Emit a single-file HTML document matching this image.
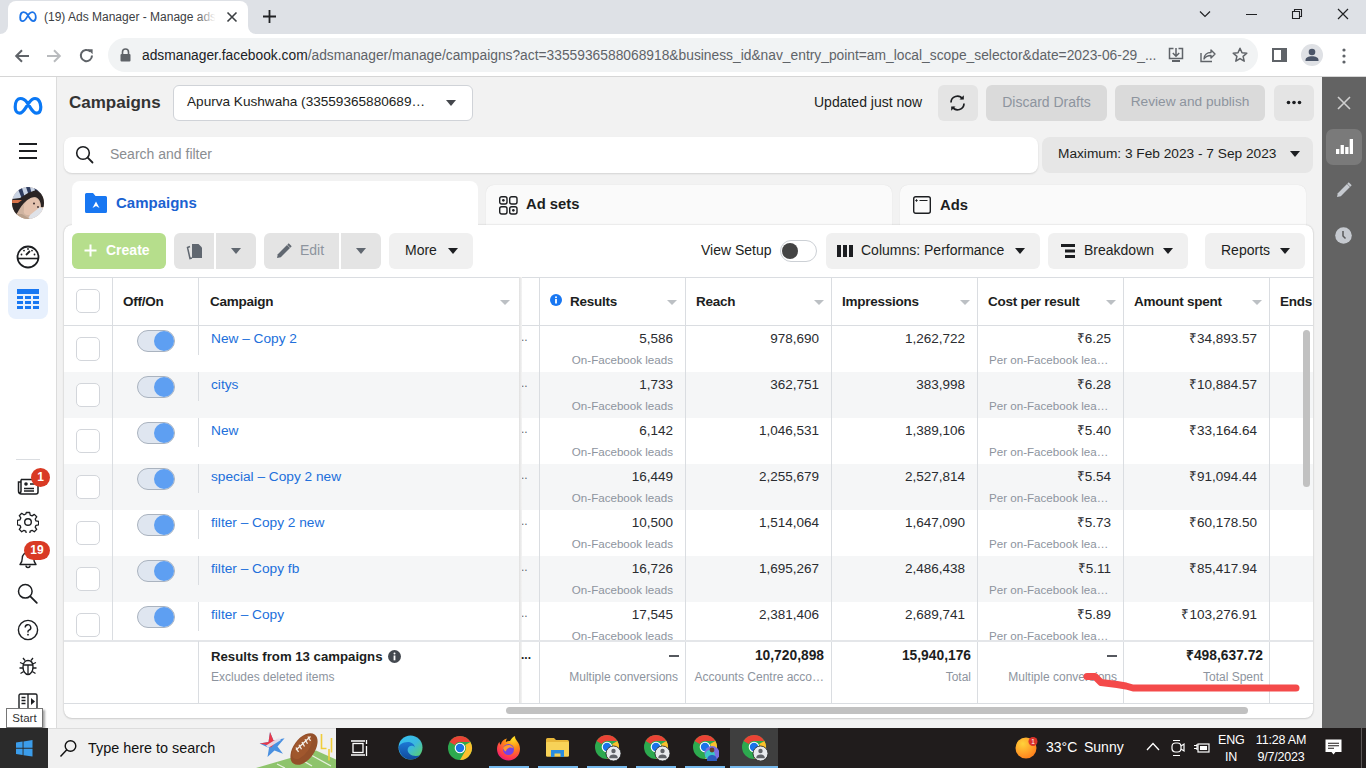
<!DOCTYPE html>
<html><head><meta charset="utf-8">
<style>
*{box-sizing:border-box;margin:0;padding:0}
html,body{width:1366px;height:768px;overflow:hidden;font-family:"Liberation Sans",sans-serif;background:#f2f2f2;position:relative;color:#1c1e21}
.a{position:absolute}
.t{white-space:nowrap;line-height:1.15}
svg{display:block}
/* chrome */
#tabbar{left:0;top:0;width:1366px;height:34px;background:#dee1e6}
#tab{left:8px;top:1px;width:240px;height:33px;background:#fff;border-radius:8px 8px 0 0}
#toolbar{left:0;top:34px;width:1366px;height:43px;background:#fff;border-bottom:1px solid #d6d6d6}
#omni{left:108px;top:38px;width:1150px;height:34px;background:#f1f3f4;border-radius:17px}
.tabtitle{left:44px;top:10px;font-size:12px;color:#3c4043}
.url{left:142px;top:47.5px;font-size:13.8px;color:#5f6368}
.url b{font-weight:normal;color:#202124}
/* app */
#leftnav{left:0;top:77px;width:57px;height:651px;background:#fff;border-right:1px solid #dcdcdc}
#rightbar{left:1322px;top:77px;width:44px;height:651px;background:#636363}
#taskbar{left:0;top:728px;width:1366px;height:40px;background:#201c1c}
.gbtn{background:#e4e4e4;border-radius:6px}
.lbtn{background:#f0f0f0;border-radius:6px}
.hdr{font-size:13.5px;letter-spacing:-0.25px;font-weight:bold;color:#1c1e21}
.num{font-size:13.5px;color:#2a2c30}
.sub{font-size:11.6px;color:#8d949e}
.lnk{font-size:13.7px;color:#216fdb}
.dots{font-size:12px;color:#65676b}
.cb{width:24px;height:24px;border:1px solid #d3d6db;border-radius:5px;background:#fff}
.tg{width:38px;height:22px;border-radius:11px;background:#dfe6f0;border:1px solid #aab3bf}
.tg .kn{position:absolute;right:0px;top:0px;width:20px;height:20px;border-radius:50%;background:#5e9ff2}
.caret{width:0;height:0;border-left:5.5px solid transparent;border-right:5.5px solid transparent;border-top:6px solid #1c1e21}
.hcaret{width:0;height:0;border-left:5px solid transparent;border-right:5px solid transparent;border-top:5px solid #bcc0c4}
.vl{width:1px;background:#dadde1}
.hl{height:1px;background:#dadde1}

</style></head><body>
<!-- ===== CHROME ===== -->
<div id="tabbar" class="a"></div>
<div class="a" style="left:0;top:26px;width:256px;height:8px;background:#fff"></div>
<div class="a" style="left:0;top:26px;width:8px;height:8px;background:#dee1e6;border-bottom-right-radius:8px"></div>
<div class="a" style="left:248px;top:26px;width:8px;height:8px;background:#dee1e6;border-bottom-left-radius:8px"></div>
<div id="tab" class="a"></div>
<svg class="a" style="left:19px;top:11px" width="18" height="12" viewBox="0 0 18 12"><path d="M4.5 1.2C2.4 1.2 1.2 3.6 1.2 6.4c0 2.2 1 3.7 2.6 3.7 1.5 0 2.5-1.1 4.2-4L9.6 3.4C10.9 1.8 11.8 1.2 13.2 1.2c2.1 0 3.6 2.4 3.6 5.1 0 2.3-1 3.8-2.6 3.8-1.6 0-2.6-1.3-4.1-3.8L8.6 3.6C7.3 1.8 6.2 1.2 4.5 1.2z" fill="none" stroke="#1a73e8" stroke-width="1.8"/></svg>
<div class="a t tabtitle" style="top:11px">(19) Ads Manager - Manage ads</div>
<div class="a" style="left:196px;top:6px;width:28px;height:24px;background:linear-gradient(90deg,rgba(255,255,255,0),#fff 70%)"></div>
<svg class="a" style="left:226px;top:11px" width="12" height="12" viewBox="0 0 12 12"><path d="M1.5 1.5l9 9M10.5 1.5l-9 9" stroke="#3c4043" stroke-width="1.6"/></svg>
<svg class="a" style="left:262px;top:9px" width="15" height="15" viewBox="0 0 15 15"><path d="M7.5 1v13M1 7.5h13" stroke="#202124" stroke-width="1.8"/></svg>
<svg class="a" style="left:1199px;top:10px" width="12" height="8" viewBox="0 0 12 8"><path d="M1 1.5l5 5 5-5" fill="none" stroke="#202124" stroke-width="1.2"/></svg>
<div class="a" style="left:1246px;top:14px;width:11px;height:1px;background:#202124"></div>
<svg class="a" style="left:1291px;top:8px" width="12" height="12" viewBox="0 0 12 12"><path d="M1.5 3.5h7v7h-7zM3.5 3.5v-2h7v7h-2" fill="none" stroke="#202124" stroke-width="1.1"/></svg>
<svg class="a" style="left:1337px;top:8px" width="12" height="12" viewBox="0 0 12 12"><path d="M1 1l10 10M11 1L1 11" stroke="#202124" stroke-width="1.2"/></svg>
<div id="toolbar" class="a"></div>
<svg class="a" style="left:14px;top:48px" width="16" height="16" viewBox="0 0 16 16"><path d="M15 8H2.5M8 2.2L2.2 8 8 13.8" fill="none" stroke="#5f6368" stroke-width="2"/></svg>
<svg class="a" style="left:46px;top:48px" width="16" height="16" viewBox="0 0 16 16"><path d="M1 8h12.5M8 2.2L13.8 8 8 13.8" fill="none" stroke="#b9bbbe" stroke-width="2"/></svg>
<svg class="a" style="left:78px;top:47px" width="17" height="17" viewBox="0 0 17 17"><path d="M14 8.5A5.6 5.6 0 1 1 12.3 4.5" fill="none" stroke="#5f6368" stroke-width="2"/><path d="M9.6 2.2h5v5z" fill="#5f6368"/></svg>
<div id="omni" class="a"></div>
<svg class="a" style="left:120px;top:48px" width="11" height="14" viewBox="0 0 11 14"><path d="M2.5 6V4a3 3 0 0 1 6 0v2" fill="none" stroke="#5f6368" stroke-width="1.6"/><rect x="0.5" y="6" width="10" height="7.5" rx="1" fill="#5f6368"/></svg>
<div class="a t url"><b>adsmanager.facebook.com</b>/adsmanager/manage/campaigns?act=3355936588068918&amp;business_id&amp;nav_entry_point=am_local_scope_selector&amp;date=2023-06-29_...</div>
<svg class="a" style="left:1168px;top:47px" width="16" height="16" viewBox="0 0 16 16"><path d="M5.5 1.5H1.5v10h13v-10h-4" fill="none" stroke="#5f6368" stroke-width="1.5"/><path d="M8 1v8M4.8 6L8 9.2 11.2 6" fill="none" stroke="#5f6368" stroke-width="1.5"/><rect x="4" y="13" width="8" height="2" fill="#5f6368"/></svg>
<svg class="a" style="left:1200px;top:47px" width="16" height="16" viewBox="0 0 16 16"><path d="M1 6v8.5h11" fill="none" stroke="#5f6368" stroke-width="1.4"/><path d="M4 12c0-4 3-6.5 7-6.5V3l4 4-4 4V8.5c-3 0-5.5 1-7 3.5z" fill="none" stroke="#5f6368" stroke-width="1.4" stroke-linejoin="round"/></svg>
<svg class="a" style="left:1232px;top:47px" width="16" height="16" viewBox="0 0 16 16"><path d="M8 1.3l2 4.5 4.8.4-3.7 3.2 1.1 4.8L8 11.6l-4.2 2.6 1.1-4.8L1.2 6.2 6 5.8z" fill="none" stroke="#5f6368" stroke-width="1.5" stroke-linejoin="round"/></svg>
<svg class="a" style="left:1272px;top:48px" width="15" height="14" viewBox="0 0 15 14"><rect x="1" y="1" width="13" height="12" fill="none" stroke="#5f6368" stroke-width="2"/><rect x="9" y="1" width="5" height="12" fill="#5f6368"/></svg>
<div class="a" style="left:1301px;top:44px;width:22px;height:22px;border-radius:50%;background:#dfe1e5"></div>
<svg class="a" style="left:1301px;top:44px" width="22" height="22" viewBox="0 0 22 22"><circle cx="11" cy="8" r="3.3" fill="#4b5568"/><path d="M4.5 16c0-2.6 3-3.8 6.5-3.8s6.5 1.2 6.5 3.8v1h-13z" fill="#4b5568"/></svg>
<svg class="a" style="left:1342px;top:48px" width="4" height="16" viewBox="0 0 4 16"><circle cx="2" cy="2" r="1.6" fill="#5f6368"/><circle cx="2" cy="8" r="1.6" fill="#5f6368"/><circle cx="2" cy="14" r="1.6" fill="#5f6368"/></svg>

<!-- ===== LEFT NAV ===== -->
<div id="leftnav" class="a"></div>
<svg class="a" style="left:13px;top:96px" width="30" height="21" viewBox="0 0 30 21"><path d="M7.5 2.5C4 2.5 2.2 6.5 2.2 11c0 3.6 1.6 6.2 4.3 6.2 2.4 0 4-1.8 7-6.6L15.8 7C17.9 3.9 19.5 2.5 22 2.5c3.6 0 5.8 4 5.8 8.6 0 3.7-1.6 6.1-4.2 6.1-2.6 0-4.2-2.1-6.8-6.4l-2.5-4C12.1 3.6 10.3 2.5 7.5 2.5z" fill="none" stroke="#0a78f5" stroke-width="3.2"/></svg>
<div class="a" style="left:19px;top:143px;width:18px;height:2px;background:#1c1e21"></div>
<div class="a" style="left:19px;top:150px;width:18px;height:2px;background:#1c1e21"></div>
<div class="a" style="left:19px;top:157px;width:18px;height:2px;background:#1c1e21"></div>
<svg class="a" style="left:12px;top:187px" width="32" height="32" viewBox="0 0 32 32"><defs><clipPath id="avc"><circle cx="16" cy="16" r="16"/></clipPath></defs><g clip-path="url(#avc)"><rect width="32" height="32" fill="#cfb3a0"/><path d="M0 0h32v9L20 6 8 12 0 14z" fill="#c9d3e3"/><path d="M6 2l4 10 3-1-3-10zM14 0l3 9 3-1-2-8zM22 0l2 7 3 0-1-7z" fill="#2f3c5e"/><path d="M0 12l8-1 8-5 8-3 8 5v12l-3 0c0-5-2-9-6-10-4 0-8 3-11 6-4 4-6 9-8 12H0z" fill="#2a2424"/><path d="M0 13h10l-4 3H0z" fill="#d9744a"/><path d="M12 18c3-5 7-8 11-7 4 1 6 5 5 10-2 5-7 7-12 7-3 0-5-2-4-5z" fill="#e3c2ae"/><path d="M18 28l10-8 4 2v10H16z" fill="#dfe2e8"/><path d="M0 27l10 0 8 5H0z" fill="#b9a08c"/><circle cx="22" cy="16.5" r="1" fill="#3a2a2a"/><circle cx="26" cy="20" r="0.9" fill="#3a2a2a"/></g></svg>
<svg class="a" style="left:16px;top:245px" width="24" height="24" viewBox="0 0 24 24"><circle cx="12" cy="12" r="10.5" fill="none" stroke="#1c1e21" stroke-width="1.8"/><path d="M1.8 13.5h20.4" stroke="#1c1e21" stroke-width="1.6"/><path d="M10 10l4-4" stroke="#1c1e21" stroke-width="1.8"/><circle cx="5.5" cy="9.5" r="0.9" fill="#1c1e21"/><circle cx="8" cy="5.6" r="0.9" fill="#1c1e21"/><circle cx="12" cy="4" r="0.9" fill="#1c1e21"/><circle cx="18.5" cy="9.5" r="0.9" fill="#1c1e21"/><circle cx="16" cy="5.6" r="0.9" fill="#1c1e21"/></svg>
<div class="a" style="left:8px;top:279px;width:40px;height:40px;border-radius:8px;background:#e7f0fd"></div>
<svg class="a" style="left:17px;top:289px" width="22" height="20" viewBox="0 0 22 20"><rect x="0" y="0" width="22" height="5" fill="#1877f2"/><g fill="#1877f2"><rect x="0" y="7" width="6" height="3"/><rect x="8" y="7" width="6" height="3"/><rect x="16" y="7" width="6" height="3"/><rect x="0" y="12" width="6" height="3"/><rect x="8" y="12" width="6" height="3"/><rect x="16" y="12" width="6" height="3"/><rect x="0" y="17" width="6" height="3"/><rect x="8" y="17" width="6" height="3"/><rect x="16" y="17" width="6" height="3"/></g></svg>
<div class="a" style="left:16px;top:459px;width:24px;height:1px;background:#dadde1"></div>
<svg class="a" style="left:17px;top:476px" width="22" height="19" viewBox="0 0 22 19"><path d="M4 3.5h15.5a1.5 1.5 0 0 1 1.5 1.5v11a2 2 0 0 1-2 2H4.5a3 3 0 0 1-3-3V6h2.5" fill="none" stroke="#1c1e21" stroke-width="1.5"/><path d="M4 3.5v11.5a2 2 0 0 1-2 2" fill="none" stroke="#1c1e21" stroke-width="1.5"/><circle cx="9" cy="8" r="1.8" fill="#1c1e21"/><path d="M7 12.5h10M7 15h10M13 8h4" stroke="#1c1e21" stroke-width="1.3"/></svg>
<div class="a" style="left:31px;top:468px;width:19px;height:19px;border-radius:50%;background:#d93a24;color:#fff;font-size:12px;font-weight:bold;text-align:center;line-height:19px">1</div>
<svg class="a" style="left:17px;top:511px" width="22" height="22" viewBox="0 0 22 22"><path d="M9.3 1.5h3.4l.5 2.6 1.9.8 2.2-1.5 2.4 2.4-1.5 2.2.8 1.9 2.6.5v3.4l-2.6.5-.8 1.9 1.5 2.2-2.4 2.4-2.2-1.5-1.9.8-.5 2.6H9.3l-.5-2.6-1.9-.8-2.2 1.5-2.4-2.4 1.5-2.2-.8-1.9-2.6-.5V9.3l2.6-.5.8-1.9-1.5-2.2 2.4-2.4 2.2 1.5 1.9-.8z" fill="none" stroke="#1c1e21" stroke-width="1.3" stroke-linejoin="round"/><circle cx="11" cy="11" r="3.3" fill="none" stroke="#1c1e21" stroke-width="1.4"/></svg>
<svg class="a" style="left:17px;top:548px" width="22" height="22" viewBox="0 0 22 22"><path d="M3 16.5c1.5-1.5 2.3-3 2.3-6.5a5.7 5.7 0 0 1 11.4 0c0 3.5.8 5 2.3 6.5z" fill="none" stroke="#1c1e21" stroke-width="1.4" stroke-linejoin="round"/><path d="M9 17.5a2 2 0 0 0 4 0" fill="none" stroke="#1c1e21" stroke-width="1.4"/></svg>
<div class="a" style="left:24px;top:541px;width:26px;height:19px;border-radius:10px;background:#d93a24;color:#fff;font-size:12px;font-weight:bold;text-align:center;line-height:19px">19</div>
<svg class="a" style="left:17px;top:583px" width="22" height="22" viewBox="0 0 22 22"><circle cx="8.3" cy="8.3" r="6.8" fill="none" stroke="#1c1e21" stroke-width="1.5"/><path d="M13.3 13.3l6.5 6.5" stroke="#1c1e21" stroke-width="1.8" stroke-linecap="round"/></svg>
<svg class="a" style="left:17px;top:619px" width="22" height="22" viewBox="0 0 22 22"><circle cx="11" cy="11" r="9.6" fill="none" stroke="#1c1e21" stroke-width="1.4"/><path d="M8.2 8.5a2.8 2.8 0 1 1 3.8 2.6c-.7.3-1 .8-1 1.5v.9" fill="none" stroke="#1c1e21" stroke-width="1.4"/><circle cx="11" cy="15.7" r="0.9" fill="#1c1e21"/></svg>
<svg class="a" style="left:17px;top:655px" width="22" height="22" viewBox="0 0 22 22"><path d="M11 5.5c3.2 0 5 2.8 5 6.5s-2 7.5-5 7.5-5-3.8-5-7.5 1.8-6.5 5-6.5z" fill="none" stroke="#1c1e21" stroke-width="1.4"/><path d="M6.3 10h9.4M11 10v9.3M8 5.5L6 3M14 5.5l2-2.5M6 13H2.5M16 13h3.5M6.5 9L3 7.5M15.5 9L19 7.5M6.7 16.5L3.5 18.5M15.3 16.5l3.2 2" stroke="#1c1e21" stroke-width="1.3"/></svg>
<svg class="a" style="left:18px;top:693px" width="20" height="16" viewBox="0 0 20 16"><rect x="1" y="1" width="18" height="15" rx="1.5" fill="none" stroke="#1c1e21" stroke-width="1.4"/><path d="M10 1v15M3.5 4.5h4M3.5 7.5h4M3.5 10.5h4" stroke="#1c1e21" stroke-width="1.3"/><path d="M13 5l4 3.5-4 3.5z" fill="#1c1e21"/></svg>
<div class="a t" style="left:6px;top:708px;width:37px;height:20px;background:#fff;border:1px solid #767676;font-size:11.5px;line-height:18px;text-align:center;color:#333;box-shadow:2px 2px 2px rgba(0,0,0,0.35)">Start</div>

<!-- ===== RIGHT BAR ===== -->
<div id="rightbar" class="a"></div>
<svg class="a" style="left:1337px;top:96px" width="14" height="14" viewBox="0 0 14 14"><path d="M1 1l12 12M13 1L1 13" stroke="#d0d0d0" stroke-width="1.6"/></svg>
<div class="a" style="left:1326px;top:129px;width:36px;height:36px;border-radius:7px;background:#7a7a7a"></div>
<svg class="a" style="left:1336px;top:139px" width="17" height="15" viewBox="0 0 17 15"><rect x="0" y="10" width="3.3" height="5" fill="#fff"/><rect x="4.6" y="6" width="3.3" height="9" fill="#fff"/><rect x="9.2" y="8" width="3.3" height="7" fill="#fff"/><rect x="13.7" y="0" width="3.3" height="15" fill="#fff"/></svg>
<svg class="a" style="left:1336px;top:182px" width="16" height="16" viewBox="0 0 16 16"><path d="M1 15l.8-3.8L11 2l3 3-9.2 9.2z" fill="#c6cad0"/><path d="M12 1l3 3" stroke="#c6cad0" stroke-width="2"/></svg>
<svg class="a" style="left:1335px;top:227px" width="17" height="17" viewBox="0 0 17 17"><circle cx="8.5" cy="8.5" r="8.3" fill="#c6cad0"/><path d="M8 4v5l2.5 2.5" fill="none" stroke="#5a5a5a" stroke-width="1.5"/></svg>

<!-- ===== HEADER ===== -->
<div class="a t" style="left:69px;top:93px;font-size:17px;font-weight:bold;color:#333">Campaigns</div>
<div class="a" style="left:173px;top:85px;width:300px;height:36px;background:#fff;border:1px solid #d0d3d8;border-radius:6px"></div>
<div class="a t" style="left:187px;top:94px;font-size:13.6px;color:#1c1e21">Apurva Kushwaha (33559365880689…</div>
<div class="a caret" style="left:446px;top:100px;border-top-color:#44474c"></div>
<div class="a t" style="left:814px;top:94px;font-size:14px;color:#1c1e21">Updated just now</div>
<div class="a gbtn" style="left:938px;top:85px;width:40px;height:36px"></div>
<svg class="a" style="left:948px;top:94px" width="19" height="18" viewBox="0 0 19 18"><path d="M3 8.5A6.3 6.3 0 0 1 14.5 5" fill="none" stroke="#1c1e21" stroke-width="1.7"/><path d="M16 9.5A6.3 6.3 0 0 1 4.5 13" fill="none" stroke="#1c1e21" stroke-width="1.7"/><path d="M11.5 5.5h4.3V1.2z" fill="#1c1e21"/><path d="M7.5 12.5H3.2v4.3z" fill="#1c1e21"/></svg>
<div class="a" style="left:986px;top:85px;width:121px;height:36px;background:#dadada;border-radius:6px"></div>
<div class="a t" style="left:1000px;top:94px;width:93px;text-align:center;font-size:14px;color:#8d949e">Discard Drafts</div>
<div class="a" style="left:1115px;top:85px;width:150px;height:36px;background:#dadada;border-radius:6px"></div>
<div class="a t" style="left:1129px;top:94px;width:122px;text-align:center;font-size:13.7px;color:#8d949e">Review and publish</div>
<div class="a gbtn" style="left:1274px;top:85px;width:40px;height:36px"></div>
<svg class="a" style="left:1286px;top:100px" width="16" height="5" viewBox="0 0 16 5"><circle cx="2.5" cy="2.5" r="1.8" fill="#1c1e21"/><circle cx="8" cy="2.5" r="1.8" fill="#1c1e21"/><circle cx="13.5" cy="2.5" r="1.8" fill="#1c1e21"/></svg>

<div class="a" style="left:64px;top:137px;width:974px;height:36px;background:#fff;border-radius:8px;box-shadow:0 1px 2px rgba(0,0,0,0.13)"></div>
<svg class="a" style="left:75px;top:145px" width="19" height="19" viewBox="0 0 19 19"><circle cx="8" cy="8" r="6.3" fill="none" stroke="#1c1e21" stroke-width="1.6"/><path d="M12.7 12.7l4.8 4.8" stroke="#1c1e21" stroke-width="1.8" stroke-linecap="round"/></svg>
<div class="a t" style="left:110px;top:146px;font-size:14px;color:#8a8d91">Search and filter</div>
<div class="a" style="left:1042px;top:137px;width:271px;height:36px;background:#e6e6e6;border-radius:8px"></div>
<div class="a t" style="left:1058px;top:146px;font-size:13.7px;color:#1c1e21">Maximum: 3 Feb 2023 - 7 Sep 2023</div>
<div class="a caret" style="left:1290px;top:151px"></div>

<!-- tabs -->
<div class="a" style="left:486px;top:185px;width:406px;height:50px;background:#fafafa;border-radius:8px 8px 0 0;box-shadow:0 0 1px rgba(0,0,0,0.12)"></div>
<svg class="a" style="left:499px;top:196px" width="19" height="19" viewBox="0 0 19 19"><g fill="none" stroke="#1c1e21" stroke-width="1.4"><rect x="0.7" y="0.7" width="7.3" height="7.3" rx="2"/><rect x="10.7" y="0.7" width="7.3" height="7.3" rx="2"/><rect x="0.7" y="10.7" width="7.3" height="7.3" rx="2"/><rect x="10.7" y="10.7" width="7.3" height="7.3" rx="2"/></g><circle cx="4.35" cy="4.35" r="1.3" fill="#1c1e21"/><circle cx="14.35" cy="14.35" r="1.3" fill="#1c1e21"/></svg>
<div class="a t" style="left:526px;top:196px;font-size:14.8px;font-weight:bold;color:#1c1e21">Ad sets</div>
<div class="a" style="left:900px;top:185px;width:406px;height:50px;background:#fafafa;border-radius:8px 8px 0 0;box-shadow:0 0 1px rgba(0,0,0,0.12)"></div>
<svg class="a" style="left:913px;top:196px" width="18" height="18" viewBox="0 0 18 18"><rect x="0.7" y="0.7" width="16.6" height="16.6" rx="2" fill="none" stroke="#1c1e21" stroke-width="1.4"/><path d="M6.5 4.5h8M2.3 4.5h2.4M3.5 3.3v2.4" stroke="#1c1e21" stroke-width="1.1"/></svg>
<div class="a t" style="left:940px;top:197px;font-size:14.8px;font-weight:bold;color:#1c1e21">Ads</div>
<div class="a" style="left:72px;top:181px;width:406px;height:60px;background:#fff;border-radius:8px 8px 0 0"></div>
<svg class="a" style="left:85px;top:193px" width="22" height="20" viewBox="0 0 22 20"><path d="M0 1.5A1.5 1.5 0 0 1 1.5 0H8l2.5 3H20.5A1.5 1.5 0 0 1 22 4.5v14a1.5 1.5 0 0 1-1.5 1.5h-19A1.5 1.5 0 0 1 0 18.5z" fill="#1877f2"/><path d="M7.5 15L11 8.5 14.5 15 11 13z" fill="#fff"/></svg>
<div class="a t" style="left:116px;top:194px;font-size:15px;font-weight:bold;color:#1b62d1">Campaigns</div>

<!-- main card -->
<div class="a" style="left:64px;top:225px;width:1249px;height:493px;background:#fff;border-radius:8px;box-shadow:0 0 2px rgba(0,0,0,0.2),0 1px 2px rgba(0,0,0,0.1)"></div>
<div class="a" style="left:72px;top:221px;width:406px;height:10px;background:#fff"></div>
<!-- toolbar -->
<div class="a" style="left:72px;top:233px;width:94px;height:36px;background:#b6de8c;border-radius:6px"></div>
<svg class="a" style="left:84px;top:244px" width="13" height="13" viewBox="0 0 13 13"><path d="M6.5 0.5v12M0.5 6.5h12" stroke="#fff" stroke-width="2"/></svg>
<div class="a t" style="left:106px;top:242px;font-size:14px;font-weight:bold;color:#fff">Create</div>
<div class="a gbtn" style="left:174px;top:233px;width:40px;height:36px;border-radius:6px 0 0 6px"></div>
<svg class="a" style="left:186px;top:242px" width="17" height="18" viewBox="0 0 17 18"><path d="M6 2h6.5l3.5 3.5V16H6z" fill="#606770"/><path d="M4 4.5L1.5 5.5 4 16.5l2-.5" fill="none" stroke="#606770" stroke-width="1.5"/></svg>
<div class="a gbtn" style="left:216px;top:233px;width:40px;height:36px;border-radius:0 6px 6px 0"></div>
<div class="a caret" style="left:231px;top:248px;border-top-color:#606770"></div>
<div class="a gbtn" style="left:264px;top:233px;width:75px;height:36px;border-radius:6px 0 0 6px"></div>
<svg class="a" style="left:276px;top:243px" width="16" height="16" viewBox="0 0 16 16"><path d="M1 15l.8-3.8L11 2l3 3-9.2 9.2z" fill="#606770"/><path d="M12 1l3 3" stroke="#606770" stroke-width="2"/></svg>
<div class="a t" style="left:300px;top:242px;font-size:14px;color:#8d949e">Edit</div>
<div class="a gbtn" style="left:341px;top:233px;width:40px;height:36px;border-radius:0 6px 6px 0"></div>
<div class="a caret" style="left:356px;top:248px;border-top-color:#606770"></div>
<div class="a lbtn" style="left:389px;top:233px;width:84px;height:36px"></div>
<div class="a t" style="left:405px;top:242px;font-size:14px;color:#1c1e21">More</div>
<div class="a caret" style="left:448px;top:248px"></div>
<div class="a t" style="left:701px;top:242px;font-size:14px;color:#1c1e21">View Setup</div>
<div class="a" style="left:780px;top:240px;width:37px;height:22px;border-radius:11px;border:1px solid #ccd0d5;background:#fff"></div>
<div class="a" style="left:782px;top:243px;width:16px;height:16px;border-radius:50%;background:#444"></div>
<div class="a lbtn" style="left:826px;top:233px;width:214px;height:36px"></div>
<svg class="a" style="left:837px;top:245px" width="16" height="12" viewBox="0 0 16 12"><rect x="0" y="0" width="4" height="12" fill="#1c1e21"/><rect x="6" y="0" width="4" height="12" fill="#1c1e21"/><rect x="12" y="0" width="4" height="12" fill="#1c1e21"/></svg>
<div class="a t" style="left:861px;top:242px;font-size:14px;color:#1c1e21">Columns: Performance</div>
<div class="a caret" style="left:1015px;top:248px"></div>
<div class="a lbtn" style="left:1048px;top:233px;width:140px;height:36px"></div>
<svg class="a" style="left:1061px;top:244px" width="14" height="14" viewBox="0 0 14 14"><rect x="0" y="0" width="14" height="3" fill="#1c1e21"/><rect x="4" y="5.5" width="10" height="3" fill="#1c1e21"/><rect x="4" y="11" width="10" height="3" fill="#1c1e21"/></svg>
<div class="a t" style="left:1084px;top:242px;font-size:14px;color:#1c1e21">Breakdown</div>
<div class="a caret" style="left:1163px;top:248px"></div>
<div class="a lbtn" style="left:1205px;top:233px;width:100px;height:36px"></div>
<div class="a t" style="left:1221px;top:242px;font-size:14px;color:#1c1e21">Reports</div>
<div class="a caret" style="left:1280px;top:248px"></div>

<!-- table header -->
<div class="a hl" style="left:64px;top:277px;width:1249px"></div>
<div class="a hl" style="left:64px;top:325px;width:1249px"></div>
<div class="a cb" style="left:76px;top:289px"></div>
<div class="a t hdr" style="left:123px;top:294px">Off/On</div>
<div class="a t hdr" style="left:210px;top:294px">Campaign</div>
<div class="a hcaret" style="left:500px;top:300px"></div>
<svg class="a" style="left:550px;top:294px" width="12" height="12" viewBox="0 0 12 12"><circle cx="6" cy="6" r="6" fill="#1877f2"/><rect x="5.1" y="5" width="1.8" height="4.5" fill="#fff"/><circle cx="6" cy="3.2" r="1" fill="#fff"/></svg>
<div class="a t hdr" style="left:570px;top:294px">Results</div>
<div class="a hcaret" style="left:667px;top:300px"></div>
<div class="a t hdr" style="left:696px;top:294px">Reach</div>
<div class="a hcaret" style="left:814px;top:300px"></div>
<div class="a t hdr" style="left:842px;top:294px">Impressions</div>
<div class="a hcaret" style="left:960px;top:300px"></div>
<div class="a t hdr" style="left:988px;top:294px">Cost per result</div>
<div class="a hcaret" style="left:1106px;top:300px"></div>
<div class="a t hdr" style="left:1134px;top:294px">Amount spent</div>
<div class="a hcaret" style="left:1252px;top:300px"></div>
<div class="a t hdr" style="left:1280px;top:294px">Ends</div>

<!-- rows -->
<div class="a" style="left:64px;top:326px;width:1249px;height:314px;overflow:hidden">
<div class="a" style="left:-64px;top:-326px;width:1366px;height:768px">
<div class="a" style="left:64px;top:326px;width:1249px;height:46px;background:#fff"></div>
<div class="a" style="left:64px;top:372px;width:1249px;height:46px;background:#f5f6f7"></div>
<div class="a" style="left:64px;top:418px;width:1249px;height:46px;background:#fff"></div>
<div class="a" style="left:64px;top:464px;width:1249px;height:46px;background:#f5f6f7"></div>
<div class="a" style="left:64px;top:510px;width:1249px;height:46px;background:#fff"></div>
<div class="a" style="left:64px;top:556px;width:1249px;height:46px;background:#f5f6f7"></div>
<div class="a" style="left:64px;top:602px;width:1249px;height:46px;background:#fff"></div>
<div class="a cb" style="left:76px;top:337px"></div>
<div class="a tg" style="left:137px;top:330px"><div class="kn"></div></div>
<div class="a t lnk" style="left:211px;top:331px">New – Copy 2</div>
<div class="a t dots" style="left:521px;top:331px">..</div>
<div class="a vl" style="left:198px;top:326px;height:29px"></div>
<div class="a t num" style="right:693px;top:331px">5,586</div>
<div class="a t num" style="right:547px;top:331px">978,690</div>
<div class="a t num" style="right:401px;top:331px">1,262,722</div>
<div class="a t num" style="right:255px;top:331px">₹6.25</div>
<div class="a t num" style="right:109px;top:331px">₹34,893.57</div>
<div class="a t sub" style="right:693px;top:353px">On-Facebook leads</div>
<div class="a t sub" style="left:989px;top:353px">Per on-Facebook lea…</div>
<div class="a cb" style="left:76px;top:383px"></div>
<div class="a tg" style="left:137px;top:376px"><div class="kn"></div></div>
<div class="a t lnk" style="left:211px;top:377px">citys</div>
<div class="a t dots" style="left:521px;top:377px">..</div>
<div class="a vl" style="left:198px;top:372px;height:29px"></div>
<div class="a t num" style="right:693px;top:377px">1,733</div>
<div class="a t num" style="right:547px;top:377px">362,751</div>
<div class="a t num" style="right:401px;top:377px">383,998</div>
<div class="a t num" style="right:255px;top:377px">₹6.28</div>
<div class="a t num" style="right:109px;top:377px">₹10,884.57</div>
<div class="a t sub" style="right:693px;top:399px">On-Facebook leads</div>
<div class="a t sub" style="left:989px;top:399px">Per on-Facebook lea…</div>
<div class="a cb" style="left:76px;top:429px"></div>
<div class="a tg" style="left:137px;top:422px"><div class="kn"></div></div>
<div class="a t lnk" style="left:211px;top:423px">New</div>
<div class="a t dots" style="left:521px;top:423px">..</div>
<div class="a vl" style="left:198px;top:418px;height:29px"></div>
<div class="a t num" style="right:693px;top:423px">6,142</div>
<div class="a t num" style="right:547px;top:423px">1,046,531</div>
<div class="a t num" style="right:401px;top:423px">1,389,106</div>
<div class="a t num" style="right:255px;top:423px">₹5.40</div>
<div class="a t num" style="right:109px;top:423px">₹33,164.64</div>
<div class="a t sub" style="right:693px;top:445px">On-Facebook leads</div>
<div class="a t sub" style="left:989px;top:445px">Per on-Facebook lea…</div>
<div class="a cb" style="left:76px;top:475px"></div>
<div class="a tg" style="left:137px;top:468px"><div class="kn"></div></div>
<div class="a t lnk" style="left:211px;top:469px">special – Copy 2 new</div>
<div class="a t dots" style="left:521px;top:469px">..</div>
<div class="a vl" style="left:198px;top:464px;height:29px"></div>
<div class="a t num" style="right:693px;top:469px">16,449</div>
<div class="a t num" style="right:547px;top:469px">2,255,679</div>
<div class="a t num" style="right:401px;top:469px">2,527,814</div>
<div class="a t num" style="right:255px;top:469px">₹5.54</div>
<div class="a t num" style="right:109px;top:469px">₹91,094.44</div>
<div class="a t sub" style="right:693px;top:491px">On-Facebook leads</div>
<div class="a t sub" style="left:989px;top:491px">Per on-Facebook lea…</div>
<div class="a cb" style="left:76px;top:521px"></div>
<div class="a tg" style="left:137px;top:514px"><div class="kn"></div></div>
<div class="a t lnk" style="left:211px;top:515px">filter – Copy 2 new</div>
<div class="a t dots" style="left:521px;top:515px">..</div>
<div class="a vl" style="left:198px;top:510px;height:29px"></div>
<div class="a t num" style="right:693px;top:515px">10,500</div>
<div class="a t num" style="right:547px;top:515px">1,514,064</div>
<div class="a t num" style="right:401px;top:515px">1,647,090</div>
<div class="a t num" style="right:255px;top:515px">₹5.73</div>
<div class="a t num" style="right:109px;top:515px">₹60,178.50</div>
<div class="a t sub" style="right:693px;top:537px">On-Facebook leads</div>
<div class="a t sub" style="left:989px;top:537px">Per on-Facebook lea…</div>
<div class="a cb" style="left:76px;top:567px"></div>
<div class="a tg" style="left:137px;top:560px"><div class="kn"></div></div>
<div class="a t lnk" style="left:211px;top:561px">filter – Copy fb</div>
<div class="a t dots" style="left:521px;top:561px">..</div>
<div class="a vl" style="left:198px;top:556px;height:29px"></div>
<div class="a t num" style="right:693px;top:561px">16,726</div>
<div class="a t num" style="right:547px;top:561px">1,695,267</div>
<div class="a t num" style="right:401px;top:561px">2,486,438</div>
<div class="a t num" style="right:255px;top:561px">₹5.11</div>
<div class="a t num" style="right:109px;top:561px">₹85,417.94</div>
<div class="a t sub" style="right:693px;top:583px">On-Facebook leads</div>
<div class="a t sub" style="left:989px;top:583px">Per on-Facebook lea…</div>
<div class="a cb" style="left:76px;top:613px"></div>
<div class="a tg" style="left:137px;top:606px"><div class="kn"></div></div>
<div class="a t lnk" style="left:211px;top:607px">filter – Copy</div>
<div class="a t dots" style="left:521px;top:607px">..</div>
<div class="a vl" style="left:198px;top:602px;height:29px"></div>
<div class="a t num" style="right:693px;top:607px">17,545</div>
<div class="a t num" style="right:547px;top:607px">2,381,406</div>
<div class="a t num" style="right:401px;top:607px">2,689,741</div>
<div class="a t num" style="right:255px;top:607px">₹5.89</div>
<div class="a t num" style="right:109px;top:607px">₹103,276.91</div>
<div class="a t sub" style="right:693px;top:629px">On-Facebook leads</div>
<div class="a t sub" style="left:989px;top:629px">Per on-Facebook lea…</div>
</div></div>

<!-- column lines -->
<div class="a vl" style="left:112px;top:277px;height:363px"></div>
<div class="a vl" style="left:198px;top:277px;height:49px"></div>
<div class="a vl" style="left:539px;top:277px;height:427px"></div>
<div class="a vl" style="left:685px;top:277px;height:427px"></div>
<div class="a vl" style="left:831px;top:277px;height:427px"></div>
<div class="a vl" style="left:977px;top:277px;height:427px"></div>
<div class="a vl" style="left:1123px;top:277px;height:427px"></div>
<div class="a vl" style="left:1269px;top:277px;height:427px"></div>
<!-- frozen shadow -->
<div class="a" style="left:519px;top:277px;width:3px;height:427px;background:linear-gradient(90deg,#e0e0e0,#f4f4f4)"></div>
<!-- vertical scrollbar -->
<div class="a" style="left:1303px;top:330px;width:7px;height:157px;border-radius:4px;background:#c1c1c1"></div>

<!-- summary -->
<div class="a hl" style="left:64px;top:640px;width:1249px;background:#e4e6e9;height:2px"></div>
<div class="a hl" style="left:64px;top:703px;width:1249px"></div>
<div class="a vl" style="left:198px;top:641px;height:63px"></div>
<div class="a t" style="left:211px;top:649px;font-size:13.2px;font-weight:bold;color:#1c1e21">Results from 13 campaigns</div>
<svg class="a" style="left:388px;top:650px" width="13" height="13" viewBox="0 0 13 13"><circle cx="6.5" cy="6.5" r="6.5" fill="#444950"/><rect x="5.6" y="5.5" width="1.8" height="4.8" fill="#fff"/><circle cx="6.5" cy="3.5" r="1" fill="#fff"/></svg>
<div class="a t sub" style="left:211px;top:671px;font-size:12px">Excludes deleted items</div>
<div class="a t" style="left:521px;top:649px;font-size:12px;font-weight:bold;color:#1c1e21">...</div>
<div class="a" style="left:669px;top:655px;width:10px;height:2px;background:#55585e"></div>
<div class="a t sub" style="right:688px;top:671px;font-size:12px">Multiple conversions</div>
<div class="a t" style="right:542px;top:649px;font-size:13.8px;font-weight:bold;top:648px">10,720,898</div>
<div class="a t sub" style="right:542px;top:671px;font-size:12px">Accounts Centre acco…</div>
<div class="a t" style="right:395px;top:649px;font-size:13.8px;font-weight:bold;top:648px">15,940,176</div>
<div class="a t sub" style="right:395px;top:671px;font-size:12px">Total</div>
<div class="a" style="left:1107px;top:655px;width:10px;height:2px;background:#55585e"></div>
<div class="a t sub" style="right:249px;top:671px;font-size:12px">Multiple conversions</div>
<div class="a t" style="right:103px;top:649px;font-size:13.8px;font-weight:bold;top:648px">₹498,637.72</div>
<div class="a t sub" style="right:103px;top:671px;font-size:12px">Total Spent</div>
<!-- red marker -->
<svg class="a" style="left:1070px;top:660px" width="240" height="40" viewBox="1070 660 240 40"><path d="M1087 676.5L1095 676.5L1101 682.5L1117 684.5L1126 686L1133 688L1296 688" fill="none" stroke="#f44a4a" stroke-width="7" stroke-linecap="round" stroke-linejoin="round"/></svg>
<!-- horizontal scrollbar -->
<div class="a" style="left:506px;top:707px;width:742px;height:7px;border-radius:4px;background:#c1c1c1"></div>

<!-- ===== TASKBAR ===== -->
<div id="taskbar" class="a"></div>
<div class="a" style="left:0;top:728px;width:48px;height:40px;background:#2b2b2b"></div>
<svg class="a" style="left:16px;top:740px" width="17" height="17" viewBox="0 0 17 17"><path d="M0 2.4L6.6 1.5V7.8H0zM7.5 1.4L16.5 0V7.8H7.5zM0 8.7H6.6V15L0 14.1zM7.5 8.7H16.5V16.5L7.5 15.2z" fill="#3b9deb"/></svg>
<div class="a" style="left:48px;top:728px;width:288px;height:40px;background:#f0f0f0;border-top:1px solid #dcdcdc"></div>
<svg class="a" style="left:59px;top:739px" width="19" height="19" viewBox="0 0 19 19"><circle cx="11.5" cy="7" r="5.3" fill="none" stroke="#111" stroke-width="1.4"/><path d="M7.8 10.8L1.5 17.5" stroke="#111" stroke-width="1.5"/></svg>
<div class="a t" style="left:88px;top:740px;font-size:14.4px;color:#111">Type here to search</div>
<!-- search highlight illustration -->
<svg class="a" style="left:250px;top:728px" width="86" height="40" viewBox="0 0 86 40"><path d="M6 40L66 22.5L86 31.5V40z" fill="#8ec46c"/><path d="M27 36l8 4M50 31l12 7M61 27l20 11" stroke="#e6f0dc" stroke-width="1.3"/>
<path d="M20 4L23.5 12.5 34.6 10.2 27.5 18.5 33 25.7 24.5 22.5 17.5 29 19 20 9.6 15.5 18.5 14z" fill="#4a90e0"/>
<path d="M20 4L23.5 12.5 28 11.5 21 19.5 17 17 9.6 15.5 18.5 14z" fill="#e8394a"/>
<path d="M16 17.5L29 9.5 31 12 18 20z" fill="#e9e4ee" opacity="0.9"/>
<ellipse cx="54" cy="21" rx="10.5" ry="18" transform="rotate(36 54 21)" fill="#94502a"/><ellipse cx="52" cy="19" rx="7" ry="14" transform="rotate(36 52 19)" fill="#a85c30" opacity="0.6"/>
<path d="M46 22L60.5 8.5M46 19.5l2.5 4.5M49 16.8l2.5 4.5M52 14l2.5 4.5M55 11.2l2.5 4.5M58 8.5l2.5 4.5" stroke="#f4efe8" stroke-width="1.3"/>
<path d="M71.5 6v14.5h5M81.5 10v14.5M79 21v11.5" fill="none" stroke="#f0cd3a" stroke-width="1.6"/></svg>
<svg class="a" style="left:351px;top:740px" width="17" height="16" viewBox="0 0 17 16"><rect x="2" y="3.5" width="10" height="9" fill="none" stroke="#fff" stroke-width="1.3"/><path d="M0 1h14M0 15h14M15.5 0v4M15.5 6v10" stroke="#fff" stroke-width="1.3"/></svg>
<!-- edge -->
<svg class="a" style="left:398px;top:735px" width="25" height="25" viewBox="0 0 25 25"><defs><linearGradient id="eg1" x1="0" y1="0" x2="1" y2="1"><stop offset="0" stop-color="#35c1f1"/><stop offset="0.5" stop-color="#3bb8e0"/><stop offset="1" stop-color="#62d34f"/></linearGradient><linearGradient id="eg2" x1="0" y1="0" x2="0" y2="1"><stop offset="0" stop-color="#1c78d5"/><stop offset="1" stop-color="#114a9b"/></linearGradient></defs><circle cx="12.5" cy="12.5" r="12" fill="url(#eg1)"/><path d="M0.8 12c0 6.5 5 12.5 12 12.5 4 0 7.5-1.8 9.5-4.5-3 1.5-8 1.5-11-1.5-2.5-2.5-2-6.5 1-7.5 2-0.7 4 0 4.5 1.5 0-3-3-5.5-7-5.5-5 0-9 3-9 5z" fill="url(#eg2)"/></svg>
<!-- chrome -->
<svg class="a" style="left:447px;top:735px" width="26" height="26" viewBox="0 0 26 26"><circle cx="13" cy="13" r="12" fill="#2da94f"/><path d="M13 1a12 12 0 0 1 10.4 6H13a6 6 0 0 0-5.2 3L2.6 7A12 12 0 0 1 13 1z" fill="#ea4335"/><path d="M23.4 7A12 12 0 0 1 13 25l5.2-9a6 6 0 0 0 0-6z" fill="#fbc02d"/><circle cx="13" cy="13" r="5.3" fill="#fff"/><circle cx="13" cy="13" r="4.2" fill="#1a73e8"/></svg>
<!-- firefox -->
<svg class="a" style="left:496px;top:736px" width="25" height="25" viewBox="0 0 25 25"><defs><radialGradient id="ff1" cx="0.7" cy="0.1" r="1"><stop offset="0" stop-color="#ffe226"/><stop offset="0.4" stop-color="#ff8a16"/><stop offset="0.8" stop-color="#ff3750"/><stop offset="1" stop-color="#e31587"/></radialGradient></defs><path d="M12.5 24.5C6 24.5 1 19.3 1 13c0-3 1-5.5 2.5-7.3 0 1.5.6 2.5 1.3 3C5.5 5 8 3 11 2.5c-1 1.3-1.3 2.5-1 3.5 1-.8 2.5-1.2 4-1 1-2.2 3-4.2 5-5 0 2 .8 3.5 2 5 1.8 2 3 4.8 3 8 0 6.3-5 11.5-11.5 11.5z" fill="url(#ff1)"/><circle cx="12.5" cy="13.5" r="5.5" fill="#7542e5"/><path d="M7 12c1.5-2.5 4-3.5 6.5-3 2 .4 3.5 2 4 3.5-1.5-1-3.5-1.2-5-.5-1.5.7-2.5 2-2.5 3.5-1.5-.5-2.5-2-3-3.5z" fill="#ff9a2e"/></svg>
<!-- explorer -->
<svg class="a" style="left:546px;top:738px" width="23" height="19" viewBox="0 0 23 19"><path d="M0 1.5A1.5 1.5 0 0 1 1.5 0H8l2 2h11.5A1.5 1.5 0 0 1 23 3.5V17a1.5 1.5 0 0 1-1.5 1.5h-20A1.5 1.5 0 0 1 0 17z" fill="#e8b73a"/><rect x="0" y="4" width="23" height="14.5" rx="1" fill="#f7d258"/><path d="M5 19v-7h13v7h-3.5v-3.5h-6V19z" fill="#2a8ce0"/></svg>
<div class="a" style="left:730px;top:728px;width:48px;height:40px;background:#3f3f3f"></div>
<div class="a" style="left:489px;top:766px;width:40px;height:2px;background:#76b9ed"></div>
<div class="a" style="left:538px;top:766px;width:40px;height:2px;background:#76b9ed"></div>
<div class="a" style="left:587px;top:766px;width:40px;height:2px;background:#76b9ed"></div>
<div class="a" style="left:636px;top:766px;width:40px;height:2px;background:#76b9ed"></div>
<div class="a" style="left:685px;top:766px;width:40px;height:2px;background:#76b9ed"></div>
<div class="a" style="left:730px;top:766px;width:48px;height:2px;background:#76b9ed"></div>
<svg class="a" style="left:595px;top:735px" width="26" height="26" viewBox="0 0 26 26"><use href="#chp"/></svg>
<svg class="a" style="left:644px;top:735px" width="26" height="26" viewBox="0 0 26 26"><use href="#chp"/></svg>
<svg class="a" style="left:693px;top:735px" width="26" height="26" viewBox="0 0 26 26"><use href="#chc"/><circle cx="19" cy="18.5" r="7.5" fill="#7b6fe0"/><circle cx="17" cy="20" r="5" fill="#3cc7c7"/><circle cx="19" cy="15" r="2.4" fill="#6b3f2a"/><path d="M14 26c0-4 2-6 5-6s5 2 5 6z" fill="#2c5bbf"/></svg>
<svg class="a" style="left:742px;top:735px" width="26" height="26" viewBox="0 0 26 26"><use href="#chp"/></svg>
<svg class="a" width="0" height="0" style="left:0;top:0"><defs>
<g id="chc"><circle cx="12" cy="12" r="12" fill="#2da94f"/><path d="M12 0a12 12 0 0 1 10.4 6H12a6 6 0 0 0-5.2 3L1.6 6A12 12 0 0 1 12 0z" fill="#ea4335"/><path d="M22.4 6A12 12 0 0 1 12 24l5.2-9a6 6 0 0 0 0-6z" fill="#fbc02d"/><circle cx="12" cy="12" r="5.3" fill="#fff"/><circle cx="12" cy="12" r="4.2" fill="#1a73e8"/></g>
<g id="chp"><use href="#chc"/><circle cx="18.5" cy="18.5" r="7.5" fill="#e8eaed" stroke="#1c1c1c" stroke-width="0.8"/><circle cx="18.5" cy="16" r="2.2" fill="#606368"/><path d="M14.3 22.5c0-2 1.8-3 4.2-3s4.2 1 4.2 3v.8h-8.4z" fill="#606368"/></g>
</defs></svg>
<!-- tray -->
<svg class="a" style="left:1015px;top:737px" width="24" height="22" viewBox="0 0 24 22"><defs><radialGradient id="sun" cx="0.35" cy="0.3" r="0.8"><stop offset="0" stop-color="#ffd23a"/><stop offset="1" stop-color="#ff7a1a"/></radialGradient></defs><circle cx="11" cy="11" r="10.5" fill="url(#sun)"/><circle cx="18" cy="4.5" r="4.5" fill="#d9342b"/><text x="18" y="7.3" font-size="6.5" fill="#fff" text-anchor="middle" font-family="Liberation Sans">1</text></svg>
<div class="a t" style="left:1046px;top:739px;font-size:14px;color:#fff">33°C</div><div class="a t" style="left:1084px;top:739px;font-size:14px;color:#fff">Sunny</div>
<svg class="a" style="left:1146px;top:742px" width="14" height="9" viewBox="0 0 14 9"><path d="M1 8l6-6.5L13 8" fill="none" stroke="#fff" stroke-width="1.3"/></svg>
<svg class="a" style="left:1171px;top:739px" width="14" height="18" viewBox="0 0 14 18"><rect x="1" y="4" width="9" height="9" rx="3.5" fill="none" stroke="#fff" stroke-width="1.2"/><path d="M10 7l3-2v7l-3-2" fill="none" stroke="#fff" stroke-width="1.2"/><path d="M2 1.5h7M2 16.5h7" stroke="#fff" stroke-width="1.2"/></svg>
<svg class="a" style="left:1193px;top:740px" width="17" height="14" viewBox="0 0 17 14"><rect x="5" y="4" width="11" height="8" fill="none" stroke="#fff" stroke-width="1.2"/><rect x="7" y="6" width="7" height="4" fill="#fff"/><path d="M1 5.5h3M1 8.5h3M4 4v6" stroke="#fff" stroke-width="1.2"/></svg>
<div class="a t" style="left:1218px;top:732px;font-size:12.5px;letter-spacing:-0.2px;color:#fff;text-align:center;width:26px;line-height:16.6px">ENG<br>IN</div>
<div class="a t" style="left:1251px;top:732px;width:60px;font-size:12.5px;letter-spacing:-0.2px;color:#fff;text-align:center;line-height:16.6px">11:28 AM<br>9/7/2023</div>
<svg class="a" style="left:1325px;top:739px" width="17" height="18" viewBox="0 0 17 18"><path d="M0.5 0.5h16v12.5H10.5l-2 2.5-2-2.5H0.5z" fill="#fff"/><path d="M3 4.3h11M3 6.8h11M3 9.3h6" stroke="#201c1c" stroke-width="1.1"/></svg><div class="a" style="left:1361px;top:728px;width:1px;height:40px;background:#5a5656"></div>

</body></html>
